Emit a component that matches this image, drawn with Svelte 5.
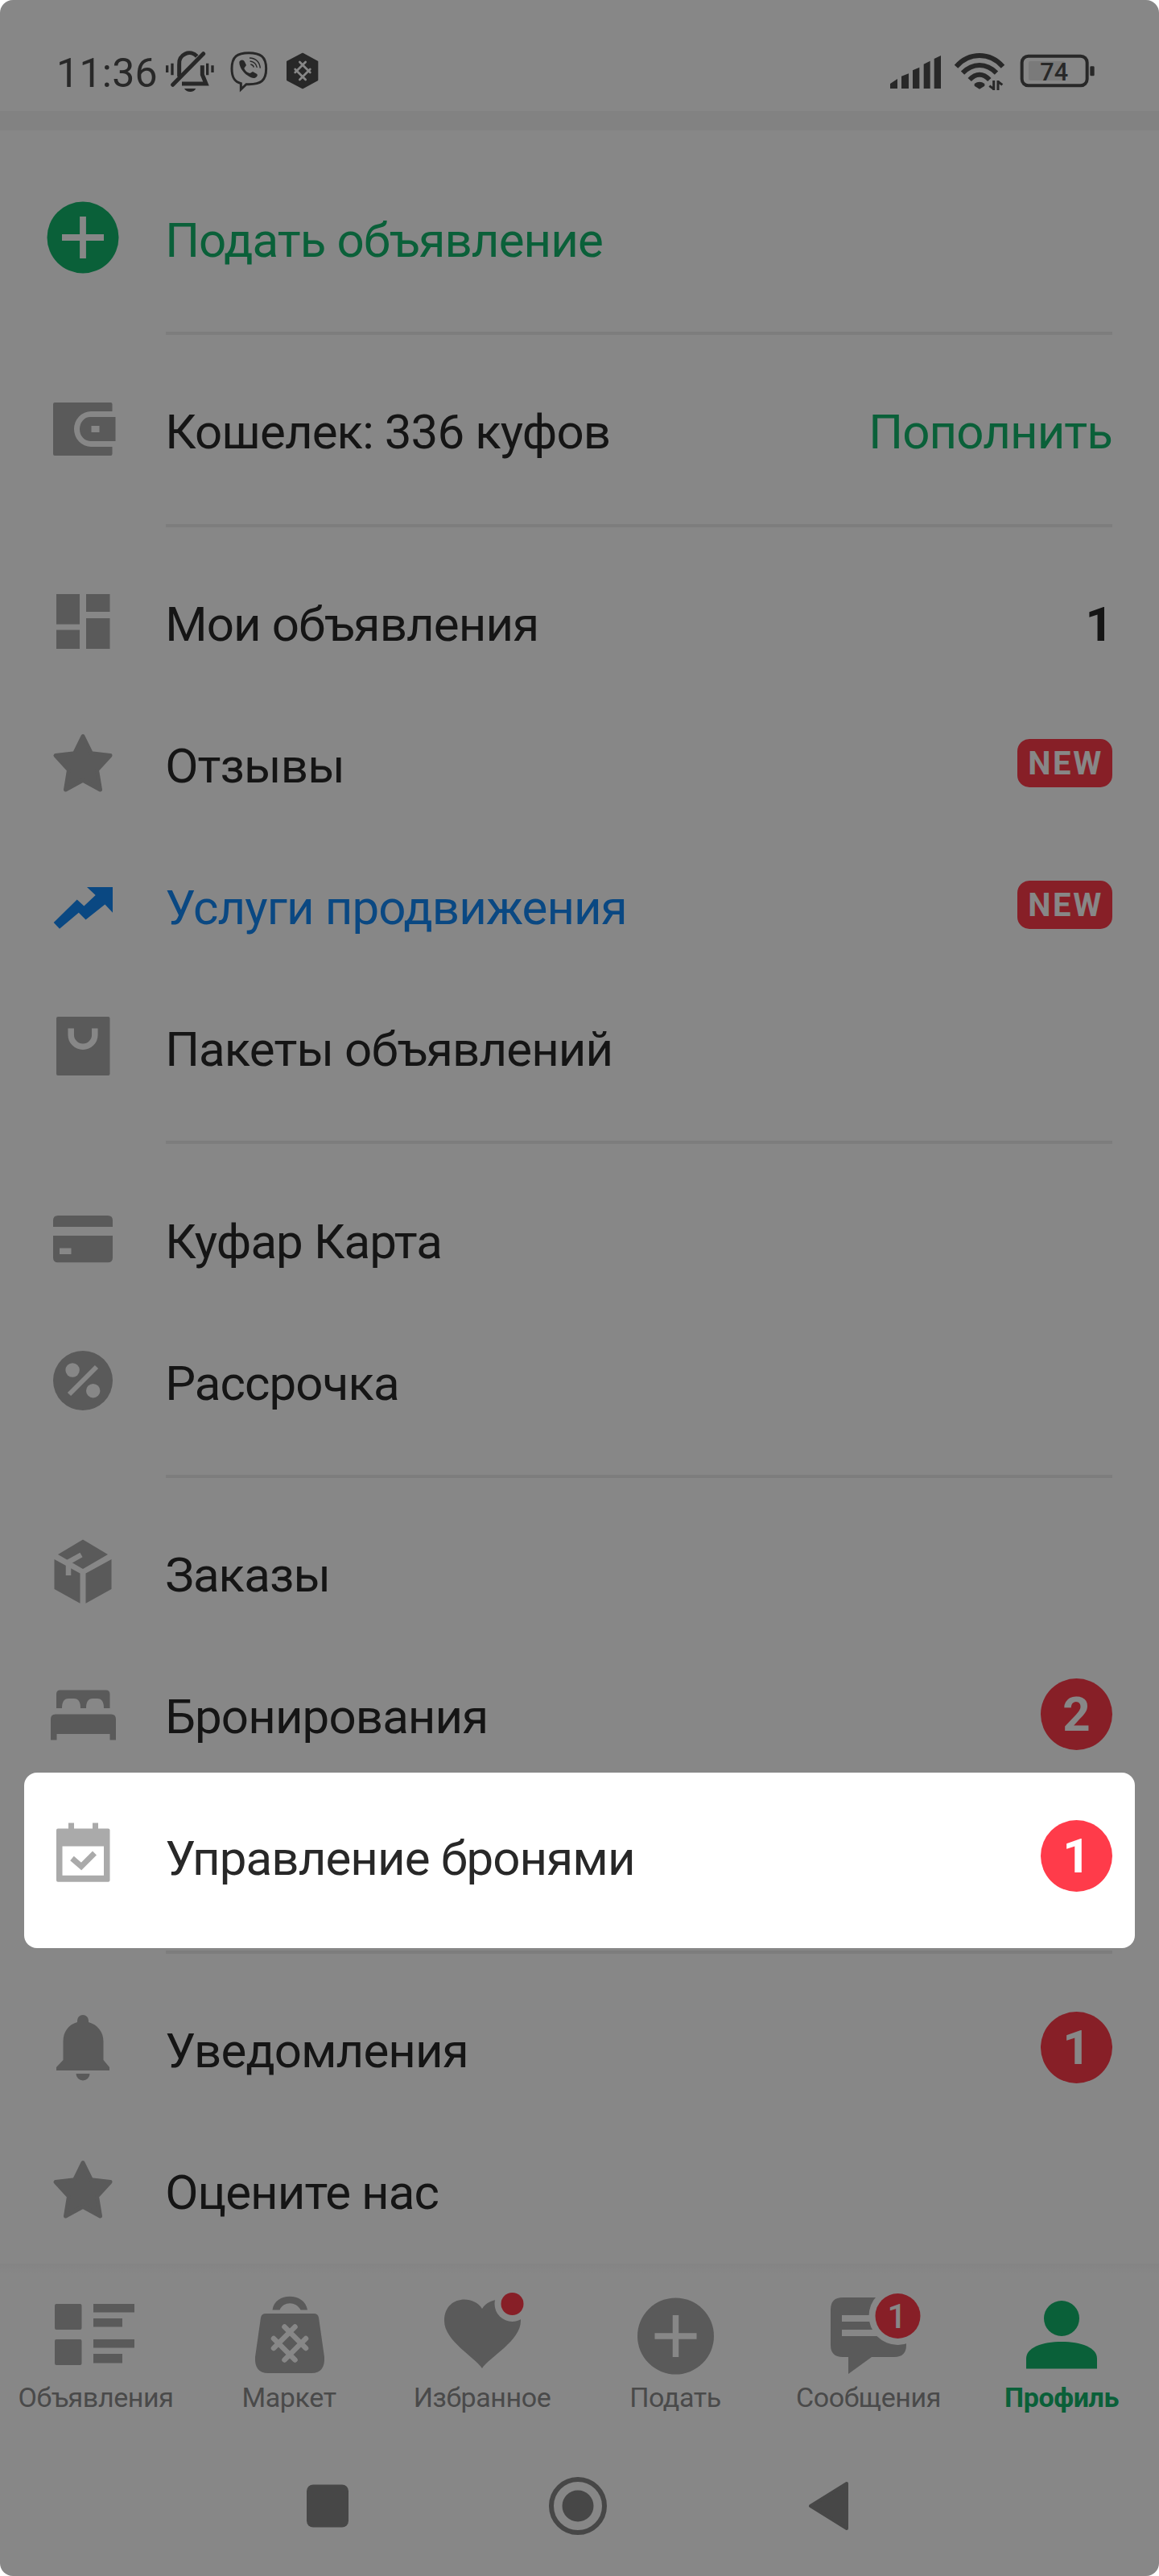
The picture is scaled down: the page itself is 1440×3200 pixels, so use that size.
<script>
  const sections = [
    [{ icon: "add", label: "Подать объявление", tone: "green" }],
    [{ icon: "wallet", label: "Кошелек: 336 куфов", action: "Пополнить" }],
    [
      { icon: "dashboard", label: "Мои объявления", total: 1 },
      { icon: "star", label: "Отзывы", isNew: true },
      { icon: "trend", label: "Услуги продвижения", tone: "blue", isNew: true },
      { icon: "bag", label: "Пакеты объявлений" },
    ],
    [
      { icon: "card", label: "Куфар Карта" },
      { icon: "percent", label: "Рассрочка" },
    ],
    [
      { icon: "box", label: "Заказы" },
      { icon: "bed", label: "Бронирования", badge: 2 },
      { icon: "calendar", label: "Управление бронями", badge: 1, spotlight: true },
    ],
    [
      { icon: "bell", label: "Уведомления", badge: 1 },
      { icon: "star", label: "Оцените нас" },
    ],
  ];

  const tabs = [
    { icon: "list", label: "Объявления" },
    { icon: "market", label: "Маркет" },
    { icon: "heart", label: "Избранное" },
    { icon: "plus", label: "Подать" },
    { icon: "chat", label: "Сообщения" },
    { icon: "profile", label: "Профиль", active: true },
  ];
</script>

<div class="phone">
  <header class="status">
    <span class="time">11:36</span>
    <svg class="notices" viewBox="0 0 660 240">
      <g fill="none" stroke="currentColor" stroke-width="15">
        <path d="M98 136V90a38 38 0 0 1 66-30" />
        <path d="M74 166 188 50" stroke-linecap="round" />
        <path d="M184 94v34l14 34h-90" />
        <path d="M53 94v26M72 86v44M203 86v44M222 94v26" stroke-width="10" />
      </g>
      <path d="M117 180h43q-6 12-21 12t-22-12z" fill="currentColor" />
      <path
        d="M357 47c44 0 65 14 65 59s-20 58-64 58h-10l-20 19v-22c-24-6-34-22-34-55 0-45 20-59 63-59z"
        fill="none"
        stroke="currentColor"
        stroke-width="9"
      />
      <path
        d="M322 80c6-9 15-9 20 0l6 13-8 11q6 16 22 19l10-6 16 9c5 7-4 15-12 15-26-4-55-34-54-61z"
        fill="currentColor"
      />
      <path d="M360 66q36 2 40 38M362 78q22 3 26 24M364 90q10 1 12 11" fill="none" stroke="currentColor" stroke-width="4" />
      <path d="M558 50 613 80v68l-55 30-57-30V80z" fill="currentColor" stroke="currentColor" stroke-width="6" stroke-linejoin="round" />
      <g fill="none" stroke="#fff" stroke-width="8" stroke-linecap="round">
        <path d="M547 81l39 39M530 108l39 39M569 81l-39 39M586 108l-39 39" />
      </g>
    </svg>
    <svg class="signals" viewBox="0 0 840 240">
      <path d="M48 180v-18l27-18v36zM90 180v-46l27-10v56zM132 180v-68l25-11v79zM173 180V89l24-12v103zM212 180V69l25-12v123z" fill="currentColor" />
      <g fill="none" stroke="currentColor" stroke-width="18">
        <path d="M294 98q36-41 87-41t87 41" />
        <path d="M318 122q28-29 63-29t63 29" />
        <path d="M344 147q18-19 37-19t37 19" />
      </g>
      <path d="M362 162q19-14 38 0v8l-19 12-19-12z" fill="currentColor" />
      <path d="M434 150v36M418 170l16 12M450 186v-36M466 166l-16-12" fill="none" stroke="currentColor" stroke-width="9" />
      <rect x="539" y="59" width="243" height="110" rx="24" fill="none" stroke="currentColor" stroke-width="12" />
      <rect x="564" y="78" width="136" height="72" rx="6" fill="#e6e6e6" />
      <rect x="793" y="97" width="16" height="36" rx="4" fill="currentColor" />
      <text x="659" y="149" text-anchor="middle" class="charge">74</text>
    </svg>
  </header>
  <div class="band"></div>

  <main class="menu">
    {#each sections as section, i}
      {#if i > 0}
        <div class="divider"></div>
      {/if}
      {#each section as item}
        <div class="row {item.tone ?? ''}">
          {#if item.spotlight}
            <div class="spotlight"></div>
          {/if}
          <svg class="icon" viewBox="-48 -48 96 96" fill="currentColor">
            {#if item.icon === "add"}
              <circle r="44.5" />
              <path d="M-26 0h52M0-26v52" stroke="#fff" stroke-width="7.8" />
            {:else if item.icon === "wallet"}
              <path d="M-35-33h69.500q2 0 2 2v9H10a21 22 0 0 0 0 44h26.500v9q0 2-2 2H-35q-2 0-2-2v-62q0-2 2-2z" />
              <path fill-rule="evenodd" d="M9-15h31.500v30H9A13 15 0 0 1 9-15zM10.500-4v8h10v-8z" />
            {:else if item.icon === "dashboard"}
              <path d="M-33-34h29V3.500h-29zM-33 10.500h29v23.500h-29zM4-34h29.500v22H4zM4-4h29.500v38H4z" />
            {:else if item.icon === "star"}
              <path
                d="M0-33.500 10.300-12.300 34-9.500 17.500 8.500 21.500 33 0 21.200-21.500 33-17.500 8.500-34-9.500-10.300-12.300z"
                stroke="currentColor"
                stroke-width="5"
                stroke-linejoin="round"
              />
            {:else if item.icon === "trend"}
              <path d="M-36.300 22-7.300-6.500 1.400 1.500 15.700-12 5-22h32V9.800L27.400-.4 3.500 18.400-5.200 9.800-29 29.700z" />
            {:else if item.icon === "bag"}
              <rect x="-33" y="-37" width="66.500" height="73" rx="2" />
              <path d="M-14.800-22.400v7.900a14.800 14.800 0 0 0 29.600 0v-7.900" fill="none" stroke="#fff" stroke-width="7.500" />
            {:else if item.icon === "card"}
              <path d="M-37-15v-8q0-6 6-6h62q6 0 6 6v8z" />
              <path fill-rule="evenodd" d="M-37-4h74v27.300q0 6-6 6h-62q-6 0-6-6zM-29 11.500v7.500h14.500v-7.500z" />
            {:else if item.icon === "percent"}
              <circle r="37" />
              <circle cx="-12.900" cy="-13" r="8.700" fill="#fff" />
              <circle cx="12.700" cy="12.700" r="8.700" fill="#fff" />
              <path d="M-17 17 17-17" stroke="#fff" stroke-width="6" />
            {:else if item.icon === "box"}
              <path d="M0-40.500 31-22 0-4-31-22z" />
              <path d="M-35.500-16-3.500 1.500v37.200L-35.500 21zM35.500-16 3.500 1.500v37.200L35.500 21z" />
              <path d="M-2-21.500-18-12.500V4" fill="none" stroke="#fff" stroke-width="6.500" />
            {:else if item.icon === "bed"}
              <path
                d="M-28-29.500h56.500q5 0 5 5V-7H26q0-12-8-12h-6Q4-19 4-7h-7q0-12-8-12h-7q-8 0-8 12h-7v-17.500q0-5 5-5z"
              />
              <path d="M-34 .5h69q6 0 6 6v26h-7.500V25h-66v7.500H-40v-26q0-6 6-6z" />
            {:else if item.icon === "calendar"}
              <path fill-rule="evenodd" d="M-31-33.500h13v-7h7v7h23v-7h7v7h12.500q2 0 2 2v62.200q0 2-2 2H-31q-2 0-2-2v-62.200q0-2 2-2zM-25.500-11.500v36.200h51.500v-36.200z" />
              <path d="M-13.500 3.500-2 13.500 14.500-3" fill="none" stroke="currentColor" stroke-width="7" />
            {:else if item.icon === "bell"}
              <path d="M-7-32v-2a7 7 0 0 1 14 0v2C18-29 25.500-20 25.500-8v23L33 24v4h-66v-4l8.500-9V-8C-24.500-20-18-29-7-32z" />
              <path d="M-8.500 32h17a8.500 8.500 0 0 1-17 0z" />
            {/if}
          </svg>
          <span class="label">{item.label}</span>
          {#if item.action}
            <span class="action">{item.action}</span>
          {/if}
          {#if item.total}
            <span class="total">{item.total}</span>
          {/if}
          {#if item.isNew}
            <span class="new">NEW</span>
          {/if}
          {#if item.badge}
            <span class="badge">{item.badge}</span>
          {/if}
        </div>
      {/each}
    {/each}
  </main>

  <nav class="tabs">
    {#each tabs as tab}
      <div class="tab" class:active={tab.active}>
        <svg class="tab-icon" viewBox="-60 -56 120 112" fill="currentColor">
          {#if tab.icon === "list"}
            <rect x="-52" y="-38" width="33.500" height="32" rx="2" />
            <rect x="-52" y="6" width="33.500" height="32" rx="2" />
            <path d="M-4-38h51v10.500H-4zM-4-20h36v10.500H-4zM-4 6h51v10.500H-4zM-4 24h36v11.500H-4z" />
          {:else if tab.icon === "market"}
            <path d="M-21.500-30.500C-19-53 19-53 22-30.500h-8.500C8-41.500-8-41.500-12.500-30.500z" />
            <path d="M-30-26h60q5 0 6 5l7 49q1 20-16 20h-54q-17 0-16-20l7-49q1-5 6-5z" />
            <path
              d="M-6.500-9.500 20 17M-20 5 6.500 31.500M6.500-9.500-20 17M20 5-6.500 31.500"
              fill="none"
              stroke="#fff"
              stroke-width="6.500"
              stroke-linecap="round"
            />
          {:else if tab.icon === "heart"}
            <path d="M-1 42C-10 28-48 8-48-17-48-48-12-50-1-32 10-50 47-48 47-17 47 8 8 28-1 42z" />
            <circle cx="36.500" cy="-38" r="22" fill="#fff" />
            <circle cx="36.500" cy="-38" r="14" fill="#ff3b4a" />
          {:else if tab.icon === "plus"}
            <circle cx="-.5" cy="2" r="47.500" />
            <path d="M-26.500 2h52M-.5-24v52" stroke="#fff" stroke-width="7.500" />
          {:else if tab.icon === "chat"}
            <path d="M-33-46h64q15 0 15 15v44q0 15-15 15H3L-26 49V28h-7q-15 0-15-15v-44q0-15 15-15z" />
            <path d="M-34-20H14M-34-2H20" stroke="#fff" stroke-width="8" />
            <circle cx="35.500" cy="-23" r="36" fill="#fff" />
            <circle cx="35.500" cy="-23" r="28" fill="#ff3b4a" />
            <text x="34.500" y="-8" text-anchor="middle" class="unread">1</text>
          {:else if tab.icon === "profile"}
            <circle cx="-1" cy="-20" r="22" />
            <path d="M-45 42.500V30C-45 16-25 9-1 9s44 7 44 21v12.500z" />
          {/if}
        </svg>
        <span class="tab-label">{tab.label}</span>
      </div>
    {/each}
  </nav>

  <footer class="system">
    <svg viewBox="0 0 72 72"><rect x="10" y="9.500" width="52" height="53" rx="8" /></svg>
    <svg viewBox="0 0 72 72">
      <circle cx="36" cy="36" r="33" fill="none" stroke="currentColor" stroke-width="6" />
      <circle cx="36" cy="36" r="19.500" />
    </svg>
    <svg viewBox="0 0 72 72">
      <path d="M59 8v56L14 36z" stroke="currentColor" stroke-width="4" stroke-linejoin="round" />
    </svg>
  </footer>
</div>

<style>
  :global(body) {
    margin: 0;
    background: #fff;
  }

  .phone {
    display: flex;
    flex-direction: column;
    width: 1440px;
    height: 3200px;
    border-radius: 16px;
    overflow: hidden;
    background: #fff;
    color: #282828;
    font-family: Roboto, "Noto Sans", sans-serif;
  }

  .status {
    display: flex;
    box-sizing: border-box;
    height: 138px;
    padding: 50px 70px 0 70px;
    color: #4c4c4c;
  }

  .time {
    width: 120px;
    padding-top: 13px;
    font-size: 50px;
    line-height: 56px;
    letter-spacing: 0.3px;
    white-space: nowrap;
  }

  .notices {
    width: 220px;
    height: 80px;
  }

  .signals {
    width: 280px;
    height: 80px;
    margin-left: auto;
  }

  .charge {
    fill: currentColor;
    font-size: 92px;
    font-weight: 500;
  }

  .band {
    height: 24px;
    background: #f6f6f6;
  }

  .menu {
    box-sizing: border-box;
    height: 2650px;
    padding-top: 44.67px;
  }

  .divider {
    height: 4px;
    margin: 29.33px 58px 29.33px 206px;
    background: #ededed;
  }

  .row {
    position: relative;
    display: flex;
    align-items: center;
    height: 176px;
    padding: 0 58px 0 54.67px;
  }

  /* dims everything on the screen except the row it covers */
  .spotlight {
    position: absolute;
    z-index: 2;
    top: -15.33px;
    left: 30px;
    right: 30px;
    height: 218px;
    border-radius: 16px;
    box-shadow: 0 0 0 3400px rgba(0, 0, 0, 0.47);
  }

  .icon {
    width: 96px;
    height: 96px;
    color: #aaa;
  }

  .green .icon,
  .green .label,
  .action {
    color: #14b56c;
  }

  .blue .icon,
  .blue .label {
    color: #1488f5;
  }

  .label {
    margin-left: 54.5px;
    padding-top: 8px;
    font-size: 60px;
    line-height: 70px;
    letter-spacing: -0.9px;
    white-space: nowrap;
  }

  .action,
  .total {
    margin-left: auto;
    padding-top: 8px;
    font-size: 60px;
    line-height: 70px;
    letter-spacing: -0.9px;
  }

  .total {
    font-weight: 700;
  }

  .new {
    box-sizing: border-box;
    width: 118px;
    height: 60px;
    margin-left: auto;
    padding: 1px 0 0 2px;
    border-radius: 15px;
    background: #ff3b4a;
    color: #fff;
    font-size: 40px;
    font-weight: 700;
    line-height: 60px;
    letter-spacing: 2.6px;
    text-align: center;
  }

  .badge {
    width: 89px;
    height: 89px;
    margin-left: auto;
    border-radius: 50%;
    background: #ff3b4a;
    color: #fff;
    font-size: 60px;
    font-weight: 700;
    line-height: 89px;
    text-align: center;
  }

  .tabs {
    display: grid;
    grid-template-columns: repeat(6, 240px);
    height: 214px;
    padding-top: 32px;
    background: linear-gradient(#f9f9f9, #fff 12px);
  }

  .tab {
    display: flex;
    flex-direction: column;
    align-items: center;
    color: #aaa;
  }

  .tab-icon {
    width: 120px;
    height: 112px;
    overflow: visible;
  }

  .tab-label {
    margin: 2px 2px 0 0;
    color: #8c8c8c;
    font-size: 34px;
    line-height: 40px;
    letter-spacing: -0.4px;
    white-space: nowrap;
  }

  .active,
  .active .tab-label {
    color: #14b56c;
  }

  .active .tab-label {
    font-weight: 700;
  }

  .unread {
    fill: #fff;
    font-size: 42px;
    font-weight: 500;
  }

  .system {
    display: flex;
    gap: 239px;
    padding: 19px 0 0 371px;
    color: #868686;
  }

  .system svg {
    width: 72px;
    height: 72px;
    fill: currentColor;
  }
</style>
